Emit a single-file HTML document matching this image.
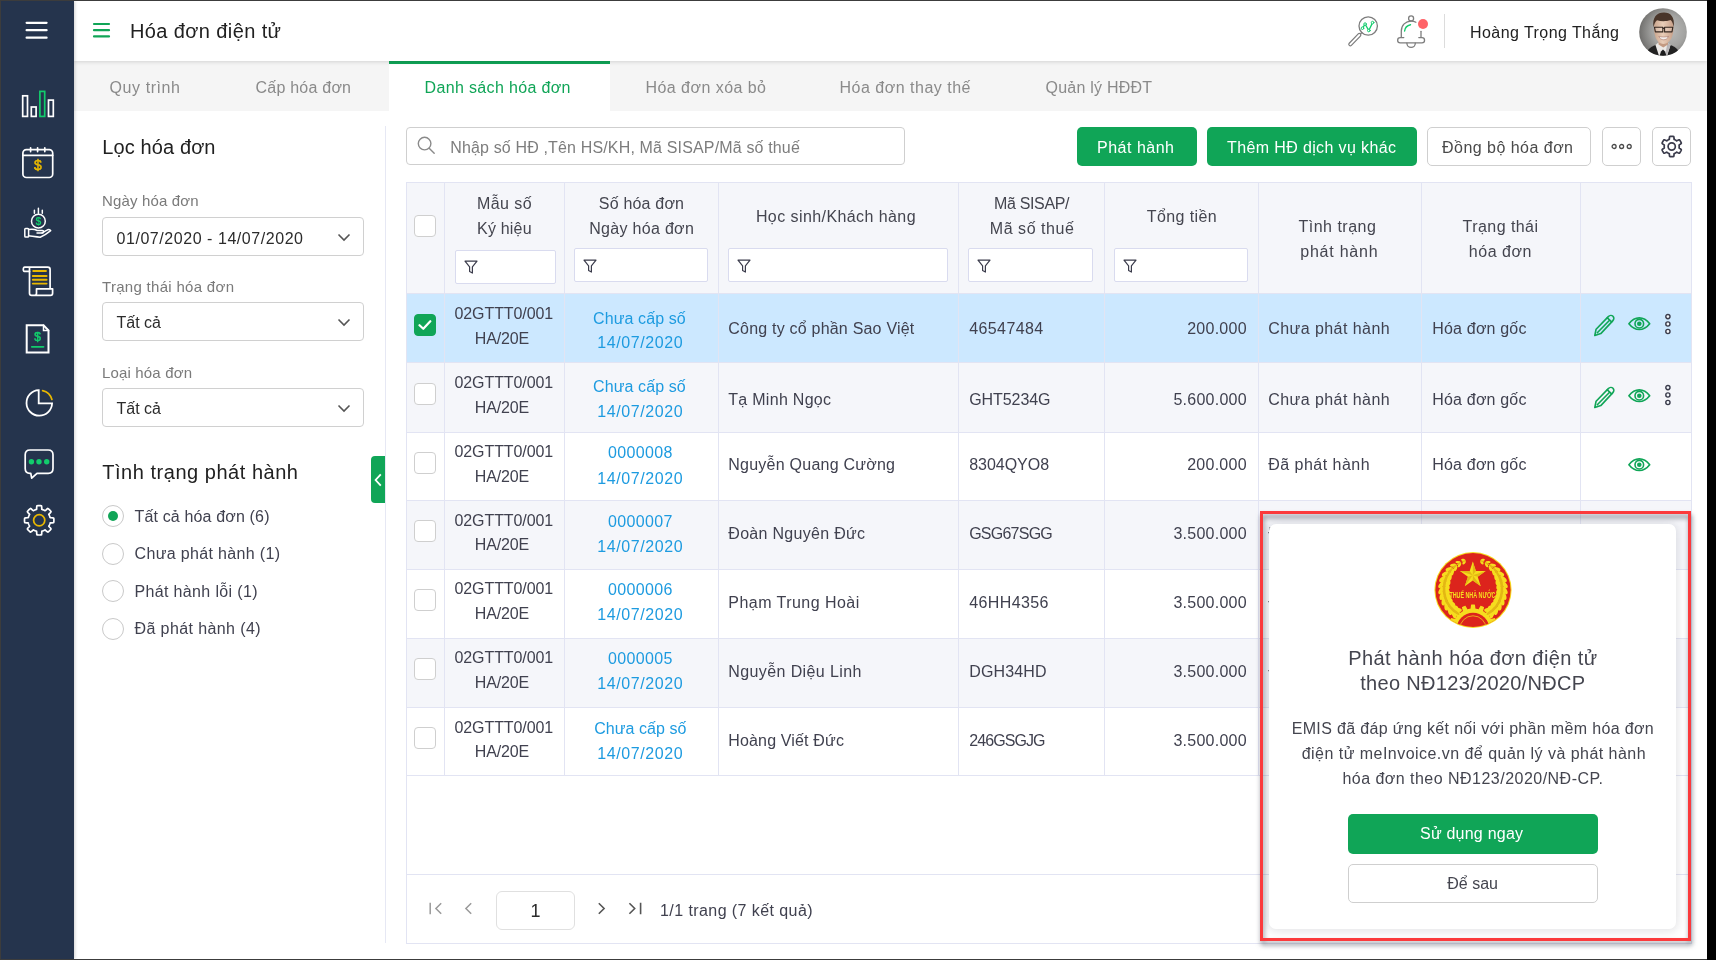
<!DOCTYPE html><html lang="vi"><head><meta charset="utf-8"><title>Hóa đơn điện tử</title><style>
*{box-sizing:border-box;margin:0;padding:0}
html,body{width:1716px;height:960px;overflow:hidden;background:#fff}
body{font-family:"Liberation Sans",sans-serif;color:#3a3b4b}
#app{position:relative;width:1716px;height:960px;overflow:hidden;background:#fff;will-change:transform}
.abs,.t,#app div,#app svg,#app section,#app header,#app nav,#app aside,#app button{position:absolute}
.t{white-space:nowrap;line-height:1;display:block}
button{font-family:inherit;border:0;background:none}
.sidebar{left:1px;top:1px;width:73px;height:958px;background:#25344d;box-shadow:1px 0 3px rgba(0,0,0,.18);z-index:4}
.header{left:74px;top:1px;width:1633px;height:60px;background:#fff;box-shadow:0 1px 4px rgba(0,0,0,.14);z-index:3}
.tabs{left:74px;top:61px;width:1633px;height:50px;background:#f5f5f5}
.tab-active{background:#fff;border-top:3px solid #10a557}
.filter{left:74px;top:111px;width:312px;height:848px;background:#fff}
.main{left:386px;top:111px;width:1321px;height:848px;background:#fff}
.sel{border:1px solid #d0d0d0;border-radius:4px;background:#fff}
.radio{width:22px;height:22px;border:1px solid #c9c9c9;border-radius:50%;background:#fff}
.radio.on::after{content:"";position:absolute;left:5px;top:5px;width:10px;height:10px;border-radius:50%;background:#10a557}
.btn{border-radius:5px;height:39px}
.btn.g{background:#10a557}
.btn.o{background:#fff;border:1px solid #cfcfcf}
.grid{border:1px solid #e2e4f3;background:#fff}
.cb{width:22px;height:22px;border:1px solid #cfcfcf;border-radius:4px;background:#fff}
.cb.on{background:#10a557;border-color:#10a557}
.fi{background:#fff;border:1px solid #d9dbef;border-radius:2px}
.vl{width:1px;background:#e2e4f3}
.hl{height:1px;background:#e2e4f3}
</style></head><body><div id="app"><aside class="sidebar"><svg style="left:-1px;top:-1px" width="75" height="560" viewBox="0 0 75 560" fill="none" stroke-linecap="round" stroke-linejoin="round"><path d="M26.6 22.8h20M26.6 30.2h20M26.6 37.7h20" stroke="#ffffff" stroke-width="2.2"/><g stroke-width="1.7" stroke-linejoin="miter"><rect x="22.7" y="95.8" width="4.8" height="20.6" stroke="#ffffff"/><rect x="31.3" y="107" width="4.8" height="9.4" stroke="#ffffff"/><rect x="39.9" y="91.4" width="4.8" height="25" stroke="#12cc6c"/><rect x="48.5" y="100.1" width="4.8" height="16.3" stroke="#ffffff"/></g><g stroke="#ffffff" stroke-width="1.7"><rect x="22.9" y="149.600" width="29.800" height="27.900" rx="3.500"/><path d="M22.900 155.300h29.800"/><path d="M30.600 147.800v3.800M37.600 147.800v3.800M44.800 147.800v3.800"/></g><text x="37.800" y="170.300" font-family="Liberation Sans,sans-serif" font-size="14" text-anchor="middle" fill="#e9b800" stroke="#e9b800" stroke-width=".5">$</text><g stroke="#ffffff" stroke-width="1.500"><circle cx="38.400" cy="221.200" r="6.900"/><path d="M34.400 210.200v3M38.400 208.300v4.900M42.300 210.200v3"/><rect x="24.800" y="228.500" width="3.800" height="8.500" rx=".8"/><path d="M28.600 229.600c3.500-.9 6.300-.4 8.600.9h5.200c1.700 0 1.700 2.600 0 2.600h-5.400"/><path d="M28.600 235.800c4.500.6 8.300 1.400 11.600 1.400 3.800-1.500 7.300-4 10.500-6.600-.900-1.600-2.500-1.400-4.200-.3l-4.400 2.600"/></g><text x="38.400" y="225.200" font-family="Liberation Sans,sans-serif" font-size="10.500" font-weight="700" text-anchor="middle" fill="#12cc6c">$</text><g stroke="#ffffff" stroke-width="1.700"><path d="M29.500 271.400h-5.200c-1.400 0-1.400-4.200.4-4.200h23c1.500 0 2.400.9 2.400 2.400v18.600"/><path d="M29.500 268v25.200c0 1.300.9 2.200 2.200 2.200h18.800c1.300 0 2.100-.9 2.100-2.200v-4.400H36.500v4.400c0 1.300-.8 2.200-2.100 2.200"/></g><path d="M33.200 271h12.800M32.800 276h13.800M32.800 279.800h13.800M32.800 283.600h13.800" stroke="#e9b800" stroke-width="1.900"/><g stroke="#ffffff" stroke-width="2" stroke-linejoin="miter"><path d="M26.700 325.200h16.800l5 5.200v22.200H26.700z"/><path d="M43.500 325.200v5.200h5" stroke-width="1.500"/></g><path d="M31.800 346.800h11.700" stroke="#12cc6c" stroke-width="1.800"/><text x="37.500" y="341.400" font-family="Liberation Sans,sans-serif" font-size="12" text-anchor="middle" fill="#12cc6c" stroke="#12cc6c" stroke-width=".6">$</text><path d="M38.700 390.100A12.800 12.800 0 1 0 52.100 403.300H38.700z" stroke="#ffffff" stroke-width="1.800" stroke-linejoin="miter"/><path d="M42.600 390.600a12.600 12.600 0 0 1 9.300 8.900" stroke="#e9b800" stroke-width="1.700"/><path d="M30 450h18.200c3 0 4.800 1.800 4.800 4.800v13.700c0 3-1.800 4.800-4.800 4.800H37l-5.300 4.900-.9-4.900H30c-3 0-4.800-1.800-4.800-4.800v-13.700c0-3 1.800-4.800 4.800-4.800z" stroke="#ffffff" stroke-width="1.700"/><g fill="#12cc6c"><circle cx="31.400" cy="461.700" r="2.700"/><circle cx="39" cy="461.700" r="2.700"/><circle cx="46.700" cy="461.700" r="2.700"/></g><path d="M39.20 505.60L39.58 505.61L39.97 505.62L40.35 505.65L40.74 505.68L41.12 505.73L41.49 505.85L41.69 506.86L41.74 508.34L41.83 509.34L42.10 509.48L42.38 509.56L42.66 509.65L42.94 509.74L43.21 509.84L43.49 509.95L43.76 510.07L44.02 510.19L44.28 510.32L44.54 510.46L44.80 510.60L45.09 510.69L45.86 510.04L46.94 509.03L47.80 508.46L48.15 508.64L48.45 508.88L48.75 509.12L49.04 509.38L49.32 509.64L49.59 509.91L49.86 510.18L50.12 510.46L50.38 510.75L50.62 511.05L50.86 511.35L51.04 511.70L50.47 512.56L49.46 513.64L48.81 514.41L48.90 514.70L49.04 514.96L49.18 515.22L49.31 515.48L49.43 515.74L49.55 516.01L49.66 516.29L49.76 516.56L49.85 516.84L49.94 517.12L50.02 517.40L50.16 517.67L51.16 517.76L52.64 517.81L53.65 518.01L53.77 518.38L53.82 518.76L53.85 519.15L53.88 519.53L53.89 519.92L53.90 520.30L53.89 520.68L53.88 521.07L53.85 521.45L53.82 521.84L53.77 522.22L53.65 522.59L52.64 522.79L51.16 522.84L50.16 522.93L50.02 523.20L49.94 523.48L49.85 523.76L49.76 524.04L49.66 524.31L49.55 524.59L49.43 524.86L49.31 525.12L49.18 525.38L49.04 525.64L48.90 525.90L48.81 526.19L49.46 526.96L50.47 528.04L51.04 528.90L50.86 529.25L50.62 529.55L50.38 529.85L50.12 530.14L49.86 530.42L49.59 530.69L49.32 530.96L49.04 531.22L48.75 531.48L48.45 531.72L48.15 531.96L47.80 532.14L46.94 531.57L45.86 530.56L45.09 529.91L44.80 530.00L44.54 530.14L44.28 530.28L44.02 530.41L43.76 530.53L43.49 530.65L43.21 530.76L42.94 530.86L42.66 530.95L42.38 531.04L42.10 531.12L41.83 531.26L41.74 532.26L41.69 533.74L41.49 534.75L41.12 534.87L40.74 534.92L40.35 534.95L39.97 534.98L39.58 534.99L39.20 535.00L38.82 534.99L38.43 534.98L38.05 534.95L37.66 534.92L37.28 534.87L36.91 534.75L36.71 533.74L36.66 532.26L36.57 531.26L36.30 531.12L36.02 531.04L35.74 530.95L35.46 530.86L35.19 530.76L34.91 530.65L34.64 530.53L34.38 530.41L34.12 530.28L33.86 530.14L33.60 530.00L33.31 529.91L32.54 530.56L31.46 531.57L30.60 532.14L30.25 531.96L29.95 531.72L29.65 531.48L29.36 531.22L29.08 530.96L28.81 530.69L28.54 530.42L28.28 530.14L28.02 529.85L27.78 529.55L27.54 529.25L27.36 528.90L27.93 528.04L28.94 526.96L29.59 526.19L29.50 525.90L29.36 525.64L29.22 525.38L29.09 525.12L28.97 524.86L28.85 524.59L28.74 524.31L28.64 524.04L28.55 523.76L28.46 523.48L28.38 523.20L28.24 522.93L27.24 522.84L25.76 522.79L24.75 522.59L24.63 522.22L24.58 521.84L24.55 521.45L24.52 521.07L24.51 520.68L24.50 520.30L24.51 519.92L24.52 519.53L24.55 519.15L24.58 518.76L24.63 518.38L24.75 518.01L25.76 517.81L27.24 517.76L28.24 517.67L28.38 517.40L28.46 517.12L28.55 516.84L28.64 516.56L28.74 516.29L28.85 516.01L28.97 515.74L29.09 515.48L29.22 515.22L29.36 514.96L29.50 514.70L29.59 514.41L28.94 513.64L27.93 512.56L27.36 511.70L27.54 511.35L27.78 511.05L28.02 510.75L28.28 510.46L28.54 510.18L28.81 509.91L29.08 509.64L29.36 509.38L29.65 509.12L29.95 508.88L30.25 508.64L30.60 508.46L31.46 509.03L32.54 510.04L33.31 510.69L33.60 510.60L33.86 510.46L34.12 510.32L34.38 510.19L34.64 510.07L34.91 509.95L35.19 509.84L35.46 509.74L35.74 509.65L36.02 509.56L36.30 509.48L36.57 509.34L36.66 508.34L36.71 506.86L36.91 505.85L37.28 505.73L37.66 505.68L38.05 505.65L38.43 505.62L38.82 505.61Z" stroke="#ffffff" stroke-width="1.700"/><circle cx="39.200" cy="520.300" r="5.600" stroke="#e9b800" stroke-width="1.700"/></svg></aside><header class="header"><svg style="left:18px;top:21px" width="20" height="16" viewBox="0 0 20 16"><path d="M2 2h15M2 8.2h15M2 14.4h15" stroke="#10a557" stroke-width="2.2" stroke-linecap="round"/></svg><span class="t" style="left:56.00px;top:20.00px;font-size:20px;color:#212121;letter-spacing:0.394px;">Hóa đơn điện tử</span><svg style="left:1266px;top:3px" width="100" height="56" viewBox="1340 4 100 56" fill="none" stroke-linecap="round" stroke-linejoin="round"><circle cx="1368.200" cy="26" r="9.200" stroke="#7d7d7d" stroke-width="1.300"/><path d="M1361.900 32.500l-1.700 1.700" stroke="#7d7d7d" stroke-width="1.300"/><path d="M1359.300 35l-9 9.300" stroke="#7d7d7d" stroke-width="4.200"/><path d="M1359.300 35l-9 9.300" stroke="#fff" stroke-width="1.800"/><path d="M1362.500 28.200l2.600-4.100 3.700 6.400 3.800-7.900" stroke="#12cc6c" stroke-width="1.300"/><g fill="#fff" stroke="#12cc6c" stroke-width="1"><circle cx="1362.500" cy="28.200" r="1.300"/><circle cx="1365.100" cy="24.100" r="1.300"/><circle cx="1368.800" cy="30.500" r="1.300"/><circle cx="1372.600" cy="22.600" r="1.300"/></g><circle cx="1411.100" cy="18.400" r="2.500" stroke="#7d7d7d" stroke-width="1.300"/><path d="M1401.300 37.300V31c0-5.800 4.300-9.900 9.800-9.900 1.800 0 3.400.4 4.800 1.200" stroke="#7d7d7d" stroke-width="1.300"/><path d="M1421 31.300v6" stroke="#7d7d7d" stroke-width="1.300"/><path d="M1403.800 37.600h-3.600c-3.400 0-3.400 5.200 0 5.200h21.800c3.400 0 3.400-5.200 0-5.200h-3.200" stroke="#7d7d7d" stroke-width="1.300"/><path d="M1406.900 43.200a4.200 4.200 0 0 0 8.400 0" stroke="#7d7d7d" stroke-width="1.300"/><path d="M1404.600 31c.4-3.300 2.600-5.600 5.900-6.300" stroke="#12cc6c" stroke-width="1.400"/><circle cx="1423" cy="24" r="5" fill="#ff6368"/></svg><div style="left:1370px;top:13px;width:1px;height:34px;background:#dcdcdc"></div><span class="t" style="left:1396.00px;top:24.00px;font-size:16px;color:#212121;letter-spacing:0.436px;">Hoàng Trọng Thắng</span><svg style="left:1565px;top:6.5px" width="48" height="48" viewBox="0 0 48 48"><defs><clipPath id="avc"><circle cx="24" cy="24" r="23.800"/></clipPath><radialGradient id="avg" cx="62%" cy="48%" r="62%"><stop offset="0" stop-color="#bdbdbb"/><stop offset=".55" stop-color="#a3a3a1"/><stop offset="1" stop-color="#6f6e6c"/></radialGradient><linearGradient id="avs" x1="0" x2="1"><stop offset="0" stop-color="#c9a48c"/><stop offset=".45" stop-color="#e9cdb8"/><stop offset="1" stop-color="#c79f88"/></linearGradient></defs><filter id="avb" x="-10%" y="-10%" width="120%" height="120%"><feGaussianBlur stdDeviation=".45"/></filter><g clip-path="url(#avc)"><rect width="48" height="48" fill="url(#avg)"/><g filter="url(#avb)"><path d="M7 48c.5-5 3-8.500 9.500-11l7.500 5 7.500-5c6.500 2.500 9 6 9.500 11z" fill="#232224"/><path d="M16.500 37l3-2.500h9l3 2.500-3.500 11h-8z" fill="#ece9e6"/><path d="M28.500 34.500l3 2.500-3.500 11h-2z" fill="#b9b6b8"/><path d="M22 43.500l2-2 2 2 1.500 4.500h-7z" fill="#1b1b1e"/><path d="M19.500 30h9.500v6.500l-4.700 3-4.800-3z" fill="#c39a82"/><path d="M15 20c0-8 3.500-11.500 9.500-11.500S34.500 12 34.500 20c0 7-3 16-10 16S15 27 15 20z" fill="url(#avs)"/><path d="M14.500 19.500C13 9 18 4.500 25 4.500c6.500 0 11 4 9.800 15-.6-4-1.800-6.500-3.300-7.500-4 1.500-9.500 1.500-13.500.3-1.800 1.500-3 4-3.500 7.200z" fill="#4a3529"/><path d="M15.500 19.300h8.300v4.600h-7.400zM25.600 19.300h8.200l-.8 4.600h-7.400z" fill="rgba(255,255,255,.15)" stroke="#33261f" stroke-width="1.100" stroke-linejoin="round"/><path d="M23.800 20.300h1.800" stroke="#2b211c" stroke-width="1.200"/><path d="M19.800 28.300c2.800.9 6.800.9 9.700 0-1 2.400-2.700 3.500-4.900 3.500s-3.800-1.100-4.800-3.500z" fill="#f4efed" stroke="#9a6458" stroke-width=".5"/></g></g></svg></header><nav class="tabs"><div class="tab-active" style="left:315px;top:0;width:221px;height:50px"></div><span class="t" style="left:35.50px;top:19.00px;font-size:16px;color:#8a8a8a;letter-spacing:0.586px;">Quy trình</span><span class="t" style="left:181.50px;top:19.00px;font-size:16px;color:#8a8a8a;letter-spacing:0.227px;">Cấp hóa đơn</span><span class="t" style="left:350.50px;top:19.00px;font-size:16px;color:#10a557;letter-spacing:0.352px;">Danh sách hóa đơn</span><span class="t" style="left:571.50px;top:19.00px;font-size:16px;color:#8a8a8a;letter-spacing:0.456px;">Hóa đơn xóa bỏ</span><span class="t" style="left:765.50px;top:19.00px;font-size:16px;color:#8a8a8a;letter-spacing:0.502px;">Hóa đơn thay thế</span><span class="t" style="left:971.50px;top:19.00px;font-size:16px;color:#8a8a8a;letter-spacing:0.224px;">Quản lý HĐĐT</span></nav><section class="filter"><span class="t" style="left:28.30px;top:26.00px;font-size:20px;color:#212121;letter-spacing:0.111px;">Lọc hóa đơn</span><span class="t" style="left:28.00px;top:82.00px;font-size:15px;color:#7a7a7a;letter-spacing:0.163px;">Ngày hóa đơn</span><span class="t" style="left:28.00px;top:168.00px;font-size:15px;color:#7a7a7a;letter-spacing:0.301px;">Trạng thái hóa đơn</span><span class="t" style="left:28.00px;top:254.00px;font-size:15px;color:#7a7a7a;letter-spacing:0.159px;">Loại hóa đơn</span><div class="sel" style="left:28px;top:106px;width:262px;height:39px"></div><span class="t" style="left:42.50px;top:120.00px;font-size:16px;color:#2b2b2b;letter-spacing:0.551px;">01/07/2020 - 14/07/2020</span><svg style="left:263px;top:122px" width="14" height="9" viewBox="0 0 14 9"><path d="M1.5 1.5l5.5 5.5 5.5-5.5" fill="none" stroke="#555" stroke-width="1.6"/></svg><div class="sel" style="left:28px;top:191px;width:262px;height:39px"></div><span class="t" style="left:42.50px;top:204.00px;font-size:16px;color:#2b2b2b;">Tất cả</span><svg style="left:263px;top:207px" width="14" height="9" viewBox="0 0 14 9"><path d="M1.5 1.5l5.5 5.5 5.5-5.5" fill="none" stroke="#555" stroke-width="1.6"/></svg><div class="sel" style="left:28px;top:277px;width:262px;height:39px"></div><span class="t" style="left:42.50px;top:290.00px;font-size:16px;color:#2b2b2b;">Tất cả</span><svg style="left:263px;top:293px" width="14" height="9" viewBox="0 0 14 9"><path d="M1.5 1.5l5.5 5.5 5.5-5.5" fill="none" stroke="#555" stroke-width="1.6"/></svg><span class="t" style="left:28.30px;top:351.00px;font-size:20px;color:#212121;letter-spacing:0.526px;">Tình trạng phát hành</span><div class="radio on" style="left:28px;top:394.3px"></div><span class="t" style="left:60.50px;top:398.00px;font-size:16px;color:#40414f;letter-spacing:0.156px;">Tất cả hóa đơn (6)</span><div class="radio" style="left:28px;top:431.7px"></div><span class="t" style="left:60.50px;top:435.00px;font-size:16px;color:#40414f;letter-spacing:0.342px;">Chưa phát hành (1)</span><div class="radio" style="left:28px;top:469.1px"></div><span class="t" style="left:60.50px;top:473.00px;font-size:16px;color:#40414f;letter-spacing:0.350px;">Phát hành lỗi (1)</span><div class="radio" style="left:28px;top:506.8px"></div><span class="t" style="left:60.50px;top:510.00px;font-size:16px;color:#40414f;letter-spacing:0.395px;">Đã phát hành (4)</span><div style="left:311px;top:15px;width:1px;height:817px;background:#e6e8f4"></div><div style="left:297px;top:345px;width:14px;height:47px;background:#10a557;border-radius:4px 0 0 4px"><svg style="left:3px;top:17px" width="8" height="14" viewBox="0 0 8 14"><path d="M6.800 1.400L1.600 7l5.200 5.600" fill="none" stroke="#fff" stroke-width="1.8"/></svg></div></section><section class="main"><div class="sel" style="left:20px;top:16px;width:499px;height:38px;border-color:#cfcfcf"></div><svg style="left:30px;top:24px" width="20" height="20" viewBox="0 0 20 20"><circle cx="8.6" cy="8.6" r="6.3" fill="none" stroke="#8a8a8a" stroke-width="1.4"/><path d="M13.2 13.2l5 5" stroke="#8a8a8a" stroke-width="1.4" stroke-linecap="round"/></svg><span class="t" style="left:64.20px;top:29.00px;font-size:16px;color:#7d7d7d;letter-spacing:0.155px;">Nhập số HĐ ,Tên HS/KH, Mã SISAP/Mã số thuế</span><button class="btn g" style="left:691px;top:16px;width:120px"></button><span class="t" style="left:711.00px;top:29.00px;font-size:16px;color:#fff;letter-spacing:0.506px;">Phát hành</span><button class="btn g" style="left:821px;top:16px;width:210px"></button><span class="t" style="left:841.00px;top:29.00px;font-size:16px;color:#fff;letter-spacing:0.377px;">Thêm HĐ dịch vụ khác</span><button class="btn o" style="left:1041px;top:16px;width:164px"></button><span class="t" style="left:1056.00px;top:29.00px;font-size:16px;color:#4a4a4a;letter-spacing:0.473px;">Đồng bộ hóa đơn</span><button class="btn o" style="left:1216px;top:16px;width:39px"></button><svg style="left:1224px;top:31px" width="24" height="9" viewBox="0 0 24 9"><g fill="none" stroke="#4a4a4a" stroke-width="1.3"><circle cx="4.1" cy="4.5" r="2"/><circle cx="11.6" cy="4.5" r="2"/><circle cx="19.2" cy="4.5" r="2"/></g></svg><button class="btn o" style="left:1266px;top:16px;width:39px"></button><svg style="left:1272px;top:22px" width="28" height="28" viewBox="1658 133 28 28" fill="none" stroke="#3a3b4b" stroke-width="1.7" stroke-linejoin="round"><path d="M1671.70 136.30L1671.97 136.30L1672.23 136.31L1672.50 136.33L1672.77 136.36L1673.03 136.39L1673.30 136.43L1673.56 136.47L1673.79 136.67L1673.93 137.22L1673.99 137.95L1674.02 138.68L1674.06 139.22L1674.20 139.43L1674.39 139.50L1674.57 139.57L1674.75 139.65L1674.93 139.73L1675.10 139.82L1675.28 139.91L1675.45 140.00L1675.62 140.11L1675.78 140.21L1675.95 140.32L1676.11 140.43L1676.27 140.55L1676.42 140.67L1676.57 140.80L1676.82 140.81L1677.31 140.59L1677.96 140.24L1678.63 139.93L1679.17 139.78L1679.46 139.88L1679.63 140.08L1679.79 140.29L1679.95 140.50L1680.11 140.72L1680.25 140.94L1680.40 141.17L1680.53 141.40L1680.66 141.63L1680.79 141.87L1680.91 142.11L1681.02 142.35L1681.12 142.60L1681.22 142.84L1681.31 143.10L1681.26 143.40L1680.85 143.79L1680.25 144.21L1679.63 144.60L1679.19 144.91L1679.07 145.13L1679.11 145.33L1679.14 145.52L1679.16 145.72L1679.18 145.91L1679.19 146.11L1679.20 146.30L1679.20 146.50L1679.20 146.70L1679.19 146.89L1679.18 147.09L1679.16 147.28L1679.14 147.48L1679.11 147.67L1679.07 147.87L1679.19 148.09L1679.63 148.40L1680.25 148.79L1680.85 149.21L1681.26 149.60L1681.31 149.90L1681.22 150.16L1681.12 150.40L1681.02 150.65L1680.91 150.89L1680.79 151.13L1680.66 151.37L1680.53 151.60L1680.40 151.83L1680.25 152.06L1680.11 152.28L1679.95 152.50L1679.79 152.71L1679.63 152.92L1679.46 153.12L1679.17 153.22L1678.63 153.07L1677.96 152.76L1677.31 152.41L1676.82 152.19L1676.57 152.20L1676.42 152.33L1676.27 152.45L1676.11 152.57L1675.95 152.68L1675.78 152.79L1675.62 152.89L1675.45 153.00L1675.28 153.09L1675.10 153.18L1674.93 153.27L1674.75 153.35L1674.57 153.43L1674.39 153.50L1674.20 153.57L1674.06 153.78L1674.02 154.32L1673.99 155.05L1673.93 155.78L1673.79 156.33L1673.56 156.53L1673.30 156.57L1673.03 156.61L1672.77 156.64L1672.50 156.67L1672.23 156.69L1671.97 156.70L1671.70 156.70L1671.43 156.70L1671.17 156.69L1670.90 156.67L1670.63 156.64L1670.37 156.61L1670.10 156.57L1669.84 156.53L1669.61 156.33L1669.47 155.78L1669.41 155.05L1669.38 154.32L1669.34 153.78L1669.20 153.57L1669.01 153.50L1668.83 153.43L1668.65 153.35L1668.47 153.27L1668.30 153.18L1668.12 153.09L1667.95 153.00L1667.78 152.89L1667.62 152.79L1667.45 152.68L1667.29 152.57L1667.13 152.45L1666.98 152.33L1666.83 152.20L1666.58 152.19L1666.09 152.41L1665.44 152.76L1664.77 153.07L1664.23 153.22L1663.94 153.12L1663.77 152.92L1663.61 152.71L1663.45 152.50L1663.29 152.28L1663.15 152.06L1663.00 151.83L1662.87 151.60L1662.74 151.37L1662.61 151.13L1662.49 150.89L1662.38 150.65L1662.28 150.40L1662.18 150.16L1662.09 149.90L1662.14 149.60L1662.55 149.21L1663.15 148.79L1663.77 148.40L1664.21 148.09L1664.33 147.87L1664.29 147.67L1664.26 147.48L1664.24 147.28L1664.22 147.09L1664.21 146.89L1664.20 146.70L1664.20 146.50L1664.20 146.30L1664.21 146.11L1664.22 145.91L1664.24 145.72L1664.26 145.52L1664.29 145.33L1664.33 145.13L1664.21 144.91L1663.77 144.60L1663.15 144.21L1662.55 143.79L1662.14 143.40L1662.09 143.10L1662.18 142.84L1662.28 142.60L1662.38 142.35L1662.49 142.11L1662.61 141.87L1662.74 141.63L1662.87 141.40L1663.00 141.17L1663.15 140.94L1663.29 140.72L1663.45 140.50L1663.61 140.29L1663.77 140.08L1663.94 139.88L1664.23 139.78L1664.77 139.93L1665.44 140.24L1666.09 140.59L1666.58 140.81L1666.83 140.80L1666.98 140.67L1667.13 140.55L1667.29 140.43L1667.45 140.32L1667.62 140.21L1667.78 140.11L1667.95 140.00L1668.12 139.91L1668.30 139.82L1668.47 139.73L1668.65 139.65L1668.83 139.57L1669.01 139.50L1669.20 139.43L1669.34 139.22L1669.38 138.68L1669.41 137.95L1669.47 137.22L1669.61 136.67L1669.84 136.47L1670.10 136.43L1670.37 136.39L1670.63 136.36L1670.90 136.33L1671.17 136.31L1671.43 136.30Z"/><circle cx="1671.7" cy="146.5" r="3.6"/></svg><div class="grid" style="left:20px;top:71px;width:1286px;height:762px"><div style="left:0;top:0;width:1284px;height:110.2px;background:#f5f6fa"></div><div style="left:0;top:110.2px;width:1284px;height:68.8px;background:#cce8ff"></div><div style="left:0;top:179.0px;width:1284px;height:69.6px;background:#f5f6fa"></div><div style="left:0;top:248.6px;width:1284px;height:68.8px;background:#fff"></div><div style="left:0;top:317.4px;width:1284px;height:68.9px;background:#f5f6fa"></div><div style="left:0;top:386.3px;width:1284px;height:68.9px;background:#fff"></div><div style="left:0;top:455.2px;width:1284px;height:68.8px;background:#f5f6fa"></div><div style="left:0;top:524.0px;width:1284px;height:68.3px;background:#fff"></div><div class="hl" style="left:0;top:110.2px;width:1284px"></div><div class="hl" style="left:0;top:179.0px;width:1284px"></div><div class="hl" style="left:0;top:248.6px;width:1284px"></div><div class="hl" style="left:0;top:317.4px;width:1284px"></div><div class="hl" style="left:0;top:386.3px;width:1284px"></div><div class="hl" style="left:0;top:455.2px;width:1284px"></div><div class="hl" style="left:0;top:524.0px;width:1284px"></div><div class="hl" style="left:0;top:592.3px;width:1284px"></div><div class="hl" style="left:0;top:691px;width:1284px"></div><div class="vl" style="left:37px;top:0;height:592.3px"></div><div class="vl" style="left:157px;top:0;height:592.3px"></div><div class="vl" style="left:311px;top:0;height:592.3px"></div><div class="vl" style="left:551px;top:0;height:592.3px"></div><div class="vl" style="left:697px;top:0;height:592.3px"></div><div class="vl" style="left:851px;top:0;height:592.3px"></div><div class="vl" style="left:1014px;top:0;height:592.3px"></div><div class="vl" style="left:1173px;top:0;height:592.3px"></div><span class="t" style="left:70.00px;top:13.00px;font-size:16px;color:#44454f;letter-spacing:0.426px;">Mẫu số</span><span class="t" style="left:70.00px;top:38.00px;font-size:16px;color:#44454f;letter-spacing:0.204px;">Ký hiệu</span><span class="t" style="left:191.80px;top:13.00px;font-size:16px;color:#44454f;letter-spacing:0.194px;">Số hóa đơn</span><span class="t" style="left:182.20px;top:38.00px;font-size:16px;color:#44454f;letter-spacing:0.306px;">Ngày hóa đơn</span><span class="t" style="left:348.90px;top:26.00px;font-size:16px;color:#44454f;letter-spacing:0.422px;">Học sinh/Khách hàng</span><span class="t" style="left:587.00px;top:13.00px;font-size:16px;color:#44454f;letter-spacing:-0.344px;">Mã SISAP/</span><span class="t" style="left:582.80px;top:38.00px;font-size:16px;color:#44454f;letter-spacing:0.549px;">Mã số thuế</span><span class="t" style="left:739.80px;top:26.00px;font-size:16px;color:#44454f;letter-spacing:0.385px;">Tổng tiền</span><span class="t" style="left:891.50px;top:36.00px;font-size:16px;color:#44454f;letter-spacing:0.485px;">Tình trạng</span><span class="t" style="left:893.30px;top:61.00px;font-size:16px;color:#44454f;letter-spacing:0.764px;">phát hành</span><span class="t" style="left:1055.60px;top:36.00px;font-size:16px;color:#44454f;letter-spacing:0.439px;">Trạng thái</span><span class="t" style="left:1061.80px;top:61.00px;font-size:16px;color:#44454f;letter-spacing:0.544px;">hóa đơn</span><div class="cb" style="left:7.0px;top:32.3px"></div><div class="fi" style="left:47.5px;top:66.5px;width:101px;height:34px"></div><svg style="left:56.5px;top:77.0px" width="14" height="15" viewBox="0 0 14 15"><path d="M1 1.2h12l-4.6 5.6v6.3l-2.8-1.6V6.8z" fill="none" stroke="#3a3b4b" stroke-width="1.2" stroke-linejoin="round"/></svg><div class="fi" style="left:167.2px;top:65.3px;width:134px;height:34px"></div><svg style="left:176.20000000000005px;top:75.80000000000001px" width="14" height="15" viewBox="0 0 14 15"><path d="M1 1.2h12l-4.6 5.6v6.3l-2.8-1.6V6.8z" fill="none" stroke="#3a3b4b" stroke-width="1.2" stroke-linejoin="round"/></svg><div class="fi" style="left:320.8px;top:65.3px;width:220px;height:34px"></div><svg style="left:329.79999999999995px;top:75.80000000000001px" width="14" height="15" viewBox="0 0 14 15"><path d="M1 1.2h12l-4.6 5.6v6.3l-2.8-1.6V6.8z" fill="none" stroke="#3a3b4b" stroke-width="1.2" stroke-linejoin="round"/></svg><div class="fi" style="left:561.4px;top:65.3px;width:125px;height:34px"></div><svg style="left:570.4px;top:75.80000000000001px" width="14" height="15" viewBox="0 0 14 15"><path d="M1 1.2h12l-4.6 5.6v6.3l-2.8-1.6V6.8z" fill="none" stroke="#3a3b4b" stroke-width="1.2" stroke-linejoin="round"/></svg><div class="fi" style="left:707.3px;top:65.3px;width:133.5px;height:34px"></div><svg style="left:716.3px;top:75.80000000000001px" width="14" height="15" viewBox="0 0 14 15"><path d="M1 1.2h12l-4.6 5.6v6.3l-2.8-1.6V6.8z" fill="none" stroke="#3a3b4b" stroke-width="1.2" stroke-linejoin="round"/></svg><div class="cb on" style="left:7.0px;top:131.3px"><svg style="left:3px;top:4px" width="14" height="12" viewBox="0 0 14 12"><path d="M1.5 6.2l3.8 3.6 7-7.6" fill="none" stroke="#fff" stroke-width="2.2" stroke-linecap="round" stroke-linejoin="round"/></svg></div><span class="t" style="left:47.50px;top:123.00px;font-size:16px;color:#40414f;letter-spacing:-0.091px;">02GTTT0/001</span><span class="t" style="left:67.70px;top:148.00px;font-size:16px;color:#40414f;letter-spacing:-0.108px;">HA/20E</span><span class="t" style="left:186.00px;top:128.00px;font-size:16px;color:#1d9be0;letter-spacing:0.104px;">Chưa cấp số</span><span class="t" style="left:190.30px;top:152.00px;font-size:16px;color:#1d9be0;letter-spacing:0.591px;">14/07/2020</span><span class="t" style="left:321.30px;top:138.00px;font-size:16px;color:#40414f;letter-spacing:0.210px;">Công ty cổ phần Sao Việt</span><span class="t" style="left:562.20px;top:138.00px;font-size:16px;color:#40414f;letter-spacing:0.402px;">46547484</span><span class="t" style="left:780.20px;top:138.00px;font-size:16px;color:#40414f;letter-spacing:0.259px;">200.000</span><span class="t" style="left:861.20px;top:138.00px;font-size:16px;color:#40414f;letter-spacing:0.447px;">Chưa phát hành</span><span class="t" style="left:1025.30px;top:138.00px;font-size:16px;color:#40414f;letter-spacing:0.177px;">Hóa đơn gốc</span><svg style="left:1185.0px;top:129.0px" width="26" height="26" viewBox="0 0 26 26" fill="none" stroke="#10a557" stroke-width="1.600" stroke-linejoin="round" stroke-linecap="round"><path d="M4.100 17.200L16.300 4.600c1.400-1.400 3.500-1.500 4.700-.300 1.200 1.200 1.100 3.200-.300 4.600L8.800 21.600l-6 1.900z"/><path d="M5.300 20.800L17.600 8.200"/><path d="M15.300 5.900l4.300 4"/></svg><svg style="left:1220.0px;top:132.9px" width="25" height="16" viewBox="0 0 25 16" fill="none" stroke="#10a557" stroke-width="1.600" stroke-linejoin="round"><path d="M1.900 7.700C5.200 3.500 8.600 1.900 12.300 1.900s7.100 1.600 10.400 5.800c-3.300 4.200-6.700 5.800-10.400 5.800S5.200 11.900 1.900 7.700z"/><circle cx="12.300" cy="7.700" r="4.300"/><circle cx="12.300" cy="7.700" r="2.300" fill="#10a557" stroke="none"/></svg><svg style="left:1257px;top:129.6px" width="8" height="22" viewBox="0 0 8 22"><g fill="#f3f7fb" stroke="#3a3b4b" stroke-width="1.4"><circle cx="3.900" cy="3.600" r="2.100"/><circle cx="3.900" cy="11" r="2.100"/><circle cx="3.900" cy="18.500" r="2.100"/></g></svg><div class="cb" style="left:7.0px;top:200.2px"></div><span class="t" style="left:47.50px;top:192.00px;font-size:16px;color:#40414f;letter-spacing:-0.091px;">02GTTT0/001</span><span class="t" style="left:67.70px;top:217.00px;font-size:16px;color:#40414f;letter-spacing:-0.108px;">HA/20E</span><span class="t" style="left:186.00px;top:196.00px;font-size:16px;color:#1d9be0;letter-spacing:0.104px;">Chưa cấp số</span><span class="t" style="left:190.30px;top:221.00px;font-size:16px;color:#1d9be0;letter-spacing:0.591px;">14/07/2020</span><span class="t" style="left:321.30px;top:209.00px;font-size:16px;color:#40414f;letter-spacing:0.282px;">Tạ Minh Ngọc</span><span class="t" style="left:562.20px;top:209.00px;font-size:16px;color:#40414f;letter-spacing:-0.073px;">GHT5234G</span><span class="t" style="left:766.40px;top:209.00px;font-size:16px;color:#40414f;letter-spacing:0.252px;">5.600.000</span><span class="t" style="left:861.20px;top:209.00px;font-size:16px;color:#40414f;letter-spacing:0.447px;">Chưa phát hành</span><span class="t" style="left:1025.30px;top:209.00px;font-size:16px;color:#40414f;letter-spacing:0.177px;">Hóa đơn gốc</span><svg style="left:1185.0px;top:200.8px" width="26" height="26" viewBox="0 0 26 26" fill="none" stroke="#10a557" stroke-width="1.600" stroke-linejoin="round" stroke-linecap="round"><path d="M4.100 17.200L16.300 4.600c1.400-1.400 3.500-1.500 4.700-.300 1.200 1.200 1.100 3.200-.300 4.600L8.800 21.600l-6 1.900z"/><path d="M5.300 20.800L17.600 8.200"/><path d="M15.300 5.900l4.300 4"/></svg><svg style="left:1220.0px;top:204.7px" width="25" height="16" viewBox="0 0 25 16" fill="none" stroke="#10a557" stroke-width="1.600" stroke-linejoin="round"><path d="M1.900 7.700C5.200 3.500 8.600 1.900 12.300 1.900s7.100 1.600 10.400 5.800c-3.300 4.200-6.700 5.800-10.400 5.800S5.200 11.900 1.900 7.700z"/><circle cx="12.300" cy="7.700" r="4.300"/><circle cx="12.300" cy="7.700" r="2.300" fill="#10a557" stroke="none"/></svg><svg style="left:1257px;top:201.4px" width="8" height="22" viewBox="0 0 8 22"><g fill="#f3f7fb" stroke="#3a3b4b" stroke-width="1.4"><circle cx="3.900" cy="3.600" r="2.100"/><circle cx="3.900" cy="11" r="2.100"/><circle cx="3.900" cy="18.500" r="2.100"/></g></svg><div class="cb" style="left:7.0px;top:268.9px"></div><span class="t" style="left:47.50px;top:261.00px;font-size:16px;color:#40414f;letter-spacing:-0.091px;">02GTTT0/001</span><span class="t" style="left:67.70px;top:286.00px;font-size:16px;color:#40414f;letter-spacing:-0.108px;">HA/20E</span><span class="t" style="left:201.00px;top:262.00px;font-size:16px;color:#1d9be0;letter-spacing:0.367px;">0000008</span><span class="t" style="left:190.30px;top:288.00px;font-size:16px;color:#1d9be0;letter-spacing:0.591px;">14/07/2020</span><span class="t" style="left:321.30px;top:274.00px;font-size:16px;color:#40414f;letter-spacing:0.239px;">Nguyễn Quang Cường</span><span class="t" style="left:562.20px;top:274.00px;font-size:16px;color:#40414f;letter-spacing:-0.023px;">8304QYO8</span><span class="t" style="left:780.20px;top:274.00px;font-size:16px;color:#40414f;letter-spacing:0.259px;">200.000</span><span class="t" style="left:861.20px;top:274.00px;font-size:16px;color:#40414f;letter-spacing:0.484px;">Đã phát hành</span><span class="t" style="left:1025.30px;top:274.00px;font-size:16px;color:#40414f;letter-spacing:0.177px;">Hóa đơn gốc</span><svg style="left:1220.0px;top:274.0px" width="25" height="16" viewBox="0 0 25 16" fill="none" stroke="#10a557" stroke-width="1.600" stroke-linejoin="round"><path d="M1.900 7.700C5.200 3.500 8.600 1.900 12.300 1.900s7.100 1.600 10.400 5.800c-3.300 4.200-6.700 5.800-10.400 5.800S5.200 11.900 1.900 7.700z"/><circle cx="12.300" cy="7.700" r="4.300"/><circle cx="12.300" cy="7.700" r="2.300" fill="#10a557" stroke="none"/></svg><div class="cb" style="left:7.0px;top:337.4px"></div><span class="t" style="left:47.50px;top:330.00px;font-size:16px;color:#40414f;letter-spacing:-0.091px;">02GTTT0/001</span><span class="t" style="left:67.70px;top:354.00px;font-size:16px;color:#40414f;letter-spacing:-0.108px;">HA/20E</span><span class="t" style="left:201.00px;top:331.00px;font-size:16px;color:#1d9be0;letter-spacing:0.367px;">0000007</span><span class="t" style="left:190.30px;top:356.00px;font-size:16px;color:#1d9be0;letter-spacing:0.591px;">14/07/2020</span><span class="t" style="left:321.30px;top:343.00px;font-size:16px;color:#40414f;letter-spacing:0.296px;">Đoàn Nguyên Đức</span><span class="t" style="left:562.20px;top:343.00px;font-size:16px;color:#40414f;letter-spacing:-0.760px;">GSG67SGG</span><span class="t" style="left:766.40px;top:343.00px;font-size:16px;color:#40414f;letter-spacing:0.252px;">3.500.000</span><span class="t" style="left:861.20px;top:343.00px;font-size:16px;color:#40414f;letter-spacing:0.484px;">Đã phát hành</span><span class="t" style="left:1025.30px;top:343.00px;font-size:16px;color:#40414f;letter-spacing:0.177px;">Hóa đơn gốc</span><svg style="left:1220.0px;top:343.3px" width="25" height="16" viewBox="0 0 25 16" fill="none" stroke="#10a557" stroke-width="1.600" stroke-linejoin="round"><path d="M1.900 7.700C5.200 3.500 8.600 1.900 12.300 1.900s7.100 1.600 10.400 5.800c-3.300 4.200-6.700 5.800-10.400 5.800S5.200 11.900 1.900 7.700z"/><circle cx="12.300" cy="7.700" r="4.300"/><circle cx="12.300" cy="7.700" r="2.300" fill="#10a557" stroke="none"/></svg><div class="cb" style="left:7.0px;top:406.3px"></div><span class="t" style="left:47.50px;top:398.00px;font-size:16px;color:#40414f;letter-spacing:-0.091px;">02GTTT0/001</span><span class="t" style="left:67.70px;top:423.00px;font-size:16px;color:#40414f;letter-spacing:-0.108px;">HA/20E</span><span class="t" style="left:201.00px;top:399.00px;font-size:16px;color:#1d9be0;letter-spacing:0.367px;">0000006</span><span class="t" style="left:190.30px;top:424.00px;font-size:16px;color:#1d9be0;letter-spacing:0.591px;">14/07/2020</span><span class="t" style="left:321.30px;top:412.00px;font-size:16px;color:#40414f;letter-spacing:0.456px;">Phạm Trung Hoài</span><span class="t" style="left:562.20px;top:412.00px;font-size:16px;color:#40414f;letter-spacing:0.386px;">46HH4356</span><span class="t" style="left:766.40px;top:412.00px;font-size:16px;color:#40414f;letter-spacing:0.252px;">3.500.000</span><span class="t" style="left:861.20px;top:412.00px;font-size:16px;color:#40414f;letter-spacing:0.484px;">Đã phát hành</span><span class="t" style="left:1025.30px;top:412.00px;font-size:16px;color:#40414f;letter-spacing:0.177px;">Hóa đơn gốc</span><svg style="left:1220.0px;top:411.9px" width="25" height="16" viewBox="0 0 25 16" fill="none" stroke="#10a557" stroke-width="1.600" stroke-linejoin="round"><path d="M1.900 7.700C5.200 3.500 8.600 1.900 12.300 1.900s7.100 1.600 10.400 5.800c-3.300 4.200-6.700 5.800-10.400 5.800S5.200 11.900 1.900 7.700z"/><circle cx="12.300" cy="7.700" r="4.300"/><circle cx="12.300" cy="7.700" r="2.300" fill="#10a557" stroke="none"/></svg><div class="cb" style="left:7.0px;top:474.9px"></div><span class="t" style="left:47.50px;top:467.00px;font-size:16px;color:#40414f;letter-spacing:-0.091px;">02GTTT0/001</span><span class="t" style="left:67.70px;top:492.00px;font-size:16px;color:#40414f;letter-spacing:-0.108px;">HA/20E</span><span class="t" style="left:201.00px;top:468.00px;font-size:16px;color:#1d9be0;letter-spacing:0.367px;">0000005</span><span class="t" style="left:190.30px;top:493.00px;font-size:16px;color:#1d9be0;letter-spacing:0.591px;">14/07/2020</span><span class="t" style="left:321.30px;top:481.00px;font-size:16px;color:#40414f;letter-spacing:0.393px;">Nguyễn Diệu Linh</span><span class="t" style="left:562.20px;top:481.00px;font-size:16px;color:#40414f;letter-spacing:0.155px;">DGH34HD</span><span class="t" style="left:766.40px;top:481.00px;font-size:16px;color:#40414f;letter-spacing:0.252px;">3.500.000</span><span class="t" style="left:861.20px;top:481.00px;font-size:16px;color:#40414f;letter-spacing:0.484px;">Đã phát hành</span><span class="t" style="left:1025.30px;top:481.00px;font-size:16px;color:#40414f;letter-spacing:0.177px;">Hóa đơn gốc</span><svg style="left:1220.0px;top:480.7px" width="25" height="16" viewBox="0 0 25 16" fill="none" stroke="#10a557" stroke-width="1.600" stroke-linejoin="round"><path d="M1.900 7.700C5.200 3.500 8.600 1.900 12.300 1.900s7.100 1.600 10.400 5.800c-3.300 4.200-6.700 5.800-10.400 5.800S5.200 11.900 1.900 7.700z"/><circle cx="12.300" cy="7.700" r="4.300"/><circle cx="12.300" cy="7.700" r="2.300" fill="#10a557" stroke="none"/></svg><div class="cb" style="left:7.0px;top:544.1px"></div><span class="t" style="left:47.50px;top:537.00px;font-size:16px;color:#40414f;letter-spacing:-0.091px;">02GTTT0/001</span><span class="t" style="left:67.70px;top:561.00px;font-size:16px;color:#40414f;letter-spacing:-0.108px;">HA/20E</span><span class="t" style="left:187.20px;top:538.00px;font-size:16px;color:#1d9be0;letter-spacing:0.054px;">Chưa cấp số</span><span class="t" style="left:190.30px;top:563.00px;font-size:16px;color:#1d9be0;letter-spacing:0.591px;">14/07/2020</span><span class="t" style="left:321.30px;top:550.00px;font-size:16px;color:#40414f;letter-spacing:0.154px;">Hoàng Viết Đức</span><span class="t" style="left:562.20px;top:550.00px;font-size:16px;color:#40414f;letter-spacing:-0.915px;">246GSGJG</span><span class="t" style="left:766.40px;top:550.00px;font-size:16px;color:#40414f;letter-spacing:0.252px;">3.500.000</span><span class="t" style="left:861.20px;top:550.00px;font-size:16px;color:#40414f;letter-spacing:0.447px;">Chưa phát hành</span><span class="t" style="left:1025.30px;top:550.00px;font-size:16px;color:#40414f;letter-spacing:0.177px;">Hóa đơn gốc</span><svg style="left:1185.0px;top:546.4px" width="26" height="26" viewBox="0 0 26 26" fill="none" stroke="#10a557" stroke-width="1.600" stroke-linejoin="round" stroke-linecap="round"><path d="M4.100 17.200L16.300 4.600c1.400-1.400 3.500-1.500 4.700-.300 1.200 1.200 1.100 3.200-.300 4.600L8.800 21.600l-6 1.900z"/><path d="M5.300 20.800L17.600 8.200"/><path d="M15.300 5.900l4.300 4"/></svg><svg style="left:1220.0px;top:550.3px" width="25" height="16" viewBox="0 0 25 16" fill="none" stroke="#10a557" stroke-width="1.600" stroke-linejoin="round"><path d="M1.900 7.700C5.200 3.500 8.600 1.900 12.300 1.900s7.100 1.600 10.400 5.800c-3.300 4.200-6.700 5.800-10.400 5.800S5.200 11.900 1.900 7.700z"/><circle cx="12.300" cy="7.700" r="4.300"/><circle cx="12.300" cy="7.700" r="2.300" fill="#10a557" stroke="none"/></svg><svg style="left:1257px;top:547.0px" width="8" height="22" viewBox="0 0 8 22"><g fill="#f3f7fb" stroke="#3a3b4b" stroke-width="1.4"><circle cx="3.900" cy="3.600" r="2.100"/><circle cx="3.900" cy="11" r="2.100"/><circle cx="3.900" cy="18.500" r="2.100"/></g></svg><svg style="left:21px;top:718px" width="16" height="15" viewBox="0 0 16 15"><path d="M2.2 1.8v11.4M13.2 2.2L7.9 7.5l5.300 5.300" fill="none" stroke="#9a9a9a" stroke-width="1.500"/></svg><svg style="left:55px;top:718px" width="12" height="15" viewBox="0 0 12 15"><path d="M9.200 2.200L3.900 7.500l5.300 5.300" fill="none" stroke="#9a9a9a" stroke-width="1.500"/></svg><div class="sel" style="left:89px;top:707.5px;width:79px;height:39px;border-color:#e0e0e0;border-radius:6px"></div><span class="t" style="left:123.50px;top:719.00px;font-size:18px;color:#2b2b2b;">1</span><svg style="left:189px;top:718px" width="12" height="15" viewBox="0 0 12 15"><path d="M2.800 2.200l5.300 5.300-5.300 5.300" fill="none" stroke="#555" stroke-width="1.600"/></svg><svg style="left:220px;top:718px" width="16" height="15" viewBox="0 0 16 15"><path d="M13.600 1.800v11.400M2.400 2.200l5.300 5.300-5.300 5.300" fill="none" stroke="#555" stroke-width="1.600"/></svg><span class="t" style="left:253.00px;top:720.00px;font-size:16px;color:#40414f;letter-spacing:0.425px;">1/1 trang (7 kết quả)</span></div></section><div style="left:1260px;top:511px;width:431px;height:430px;border:3px solid #fb3a3c;filter:drop-shadow(1.5px 4px 2.5px rgba(45,50,65,.58));z-index:6"></div><div style="left:1269px;top:524px;width:407px;height:405px;background:#fff;border-radius:7px;box-shadow:0 1px 8px 2px rgba(60,64,80,.13);z-index:5"><svg style="left:165.2px;top:27.6px" width="78" height="76" viewBox="0 0 78 76"><defs><clipPath id="emc"><ellipse cx="39" cy="38" rx="37.600" ry="36.900"/></clipPath></defs><ellipse cx="39" cy="38" rx="38.600" ry="37.900" fill="#f6dd1e"/><ellipse cx="39" cy="38" rx="37.600" ry="36.900" fill="#dc241c"/><g clip-path="url(#emc)"><path d="M39.00 52.50L39.48 52.50L39.96 52.52L40.44 52.54L40.92 52.65L41.21 54.61L41.42 56.56L41.81 56.69L42.21 56.75L42.60 56.82L43.00 56.89L43.39 56.98L43.79 57.07L44.18 57.16L44.59 57.19L45.53 55.47L46.55 53.77L47.03 53.85L47.48 54.01L47.93 54.19L48.38 54.36L48.82 54.55L49.26 54.75L49.69 54.96L50.09 55.24L49.61 57.16L49.05 59.05L49.37 59.31L49.71 59.52L50.05 59.73L50.39 59.95L50.72 60.18L51.05 60.42L51.37 60.65L51.74 60.84L53.27 59.61L54.86 58.43L55.27 58.69L55.63 59.01L55.98 59.34L56.32 59.68L56.66 60.02L56.99 60.37L57.31 60.73L57.57 61.14L56.39 62.73L55.16 64.26L55.35 64.63L55.58 64.95L55.82 65.28L56.05 65.61L56.27 65.95L56.48 66.29L56.69 66.63L56.95 66.95L58.84 66.39L60.76 65.91L61.04 66.31L61.25 66.74L61.45 67.18L61.64 67.62L61.81 68.07L61.99 68.52L62.15 68.97L62.23 69.45L60.53 70.47L58.81 71.41L58.84 71.82L58.93 72.21L59.02 72.61L59.11 73.00L59.18 73.40L59.25 73.79L59.31 74.19L59.44 74.58L61.39 74.79L63.35 75.08L63.46 75.56L63.48 76.04L63.50 76.52L63.50 77.00L63.50 77.48L63.48 77.96L63.46 78.44L63.35 78.92L61.39 79.21L59.44 79.42L59.31 79.81L59.25 80.21L59.18 80.60L59.11 81.00L59.02 81.39L58.93 81.79L58.84 82.18L58.81 82.59L60.53 83.53L62.23 84.55L62.15 85.03L61.99 85.48L61.81 85.93L61.64 86.38L61.45 86.82L61.25 87.26L61.04 87.69L60.76 88.09L58.84 87.61L56.95 87.05L56.69 87.37L56.48 87.71L56.27 88.05L56.05 88.39L55.82 88.72L55.58 89.05L55.35 89.37L55.16 89.74L56.39 91.27L57.57 92.86L57.31 93.27L56.99 93.63L56.66 93.98L56.32 94.32L55.98 94.66L55.63 94.99L55.27 95.31L54.86 95.57L53.27 94.39L51.74 93.16L51.37 93.35L51.05 93.58L50.72 93.82L50.39 94.05L50.05 94.27L49.71 94.48L49.37 94.69L49.05 94.95L49.61 96.84L50.09 98.76L49.69 99.04L49.26 99.25L48.82 99.45L48.38 99.64L47.93 99.81L47.48 99.99L47.03 100.15L46.55 100.23L45.53 98.53L44.59 96.81L44.18 96.84L43.79 96.93L43.39 97.02L43.00 97.11L42.60 97.18L42.21 97.25L41.81 97.31L41.42 97.44L41.21 99.39L40.92 101.35L40.44 101.46L39.96 101.48L39.48 101.50L39.00 101.50L38.52 101.50L38.04 101.48L37.56 101.46L37.08 101.35L36.79 99.39L36.58 97.44L36.19 97.31L35.79 97.25L35.40 97.18L35.00 97.11L34.61 97.02L34.21 96.93L33.82 96.84L33.41 96.81L32.47 98.53L31.45 100.23L30.97 100.15L30.52 99.99L30.07 99.81L29.62 99.64L29.18 99.45L28.74 99.25L28.31 99.04L27.91 98.76L28.39 96.84L28.95 94.95L28.63 94.69L28.29 94.48L27.95 94.27L27.61 94.05L27.28 93.82L26.95 93.58L26.63 93.35L26.26 93.16L24.73 94.39L23.14 95.57L22.73 95.31L22.37 94.99L22.02 94.66L21.68 94.32L21.34 93.98L21.01 93.63L20.69 93.27L20.43 92.86L21.61 91.27L22.84 89.74L22.65 89.37L22.42 89.05L22.18 88.72L21.95 88.39L21.73 88.05L21.52 87.71L21.31 87.37L21.05 87.05L19.16 87.61L17.24 88.09L16.96 87.69L16.75 87.26L16.55 86.82L16.36 86.38L16.19 85.93L16.01 85.48L15.85 85.03L15.77 84.55L17.47 83.53L19.19 82.59L19.16 82.18L19.07 81.79L18.98 81.39L18.89 81.00L18.82 80.60L18.75 80.21L18.69 79.81L18.56 79.42L16.61 79.21L14.65 78.92L14.54 78.44L14.52 77.96L14.50 77.48L14.50 77.00L14.50 76.52L14.52 76.04L14.54 75.56L14.65 75.08L16.61 74.79L18.56 74.58L18.69 74.19L18.75 73.79L18.82 73.40L18.89 73.00L18.98 72.61L19.07 72.21L19.16 71.82L19.19 71.41L17.47 70.47L15.77 69.45L15.85 68.97L16.01 68.52L16.19 68.07L16.36 67.62L16.55 67.18L16.75 66.74L16.96 66.31L17.24 65.91L19.16 66.39L21.05 66.95L21.31 66.63L21.52 66.29L21.73 65.95L21.95 65.61L22.18 65.28L22.42 64.95L22.65 64.63L22.84 64.26L21.61 62.73L20.43 61.14L20.69 60.73L21.01 60.37L21.34 60.02L21.68 59.68L22.02 59.34L22.37 59.01L22.73 58.69L23.14 58.43L24.73 59.61L26.26 60.84L26.63 60.65L26.95 60.42L27.28 60.18L27.61 59.95L27.95 59.73L28.29 59.52L28.63 59.31L28.95 59.05L28.39 57.16L27.91 55.24L28.31 54.96L28.74 54.75L29.18 54.55L29.62 54.36L30.07 54.19L30.52 54.01L30.97 53.85L31.45 53.77L32.47 55.47L33.41 57.19L33.82 57.16L34.21 57.07L34.61 56.98L35.00 56.89L35.40 56.82L35.79 56.75L36.19 56.69L36.58 56.56L36.79 54.61L37.08 52.65L37.56 52.54L38.04 52.52L38.52 52.50Z" fill="#f6dd1e"/><circle cx="39" cy="77" r="16.300" fill="#dc241c"/><circle cx="39" cy="77" r="13.200" fill="none" stroke="#f6dd1e" stroke-width=".7"/><ellipse cx="20.0" cy="62.3" rx="4.4" ry="2.1" fill="#f6dd1e" transform="rotate(68 20.0 62.3)"/><ellipse cx="23.5" cy="57.9" rx="4.4" ry="2.1" fill="#f6dd1e" transform="rotate(8 23.5 57.9)"/><ellipse cx="21.8" cy="60.1" rx="4.4" ry="1.3" fill="#e3b714" transform="rotate(38 21.8 60.1)"/><ellipse cx="15.9" cy="58.6" rx="4.4" ry="2.1" fill="#f6dd1e" transform="rotate(78 15.9 58.6)"/><ellipse cx="20.0" cy="54.9" rx="4.4" ry="2.1" fill="#f6dd1e" transform="rotate(18 20.0 54.9)"/><ellipse cx="17.9" cy="56.7" rx="4.4" ry="1.3" fill="#e3b714" transform="rotate(48 17.9 56.7)"/><ellipse cx="12.4" cy="54.2" rx="4.4" ry="2.1" fill="#f6dd1e" transform="rotate(89 12.4 54.2)"/><ellipse cx="17.2" cy="51.3" rx="4.4" ry="2.1" fill="#f6dd1e" transform="rotate(29 17.2 51.3)"/><ellipse cx="14.8" cy="52.8" rx="4.4" ry="1.3" fill="#e3b714" transform="rotate(59 14.8 52.8)"/><ellipse cx="9.7" cy="49.2" rx="4.4" ry="2.1" fill="#f6dd1e" transform="rotate(99 9.7 49.2)"/><ellipse cx="15.0" cy="47.2" rx="4.4" ry="2.1" fill="#f6dd1e" transform="rotate(39 15.0 47.2)"/><ellipse cx="12.3" cy="48.2" rx="4.4" ry="1.3" fill="#e3b714" transform="rotate(69 12.3 48.2)"/><ellipse cx="8.0" cy="43.8" rx="4.4" ry="2.1" fill="#f6dd1e" transform="rotate(109 8.0 43.8)"/><ellipse cx="13.5" cy="42.8" rx="4.4" ry="2.1" fill="#f6dd1e" transform="rotate(49 13.5 42.8)"/><ellipse cx="10.8" cy="43.3" rx="4.4" ry="1.3" fill="#e3b714" transform="rotate(79 10.8 43.3)"/><ellipse cx="7.3" cy="38.2" rx="4.4" ry="2.1" fill="#f6dd1e" transform="rotate(120 7.3 38.2)"/><ellipse cx="12.9" cy="38.2" rx="4.4" ry="2.1" fill="#f6dd1e" transform="rotate(60 12.9 38.2)"/><ellipse cx="10.1" cy="38.2" rx="4.4" ry="1.3" fill="#e3b714" transform="rotate(90 10.1 38.2)"/><ellipse cx="7.6" cy="32.5" rx="4.4" ry="2.1" fill="#f6dd1e" transform="rotate(130 7.6 32.5)"/><ellipse cx="13.1" cy="33.4" rx="4.4" ry="2.1" fill="#f6dd1e" transform="rotate(70 13.1 33.4)"/><ellipse cx="10.3" cy="32.9" rx="4.4" ry="1.3" fill="#e3b714" transform="rotate(100 10.3 32.9)"/><ellipse cx="8.9" cy="26.9" rx="4.4" ry="2.1" fill="#f6dd1e" transform="rotate(140 8.9 26.9)"/><ellipse cx="14.2" cy="28.8" rx="4.4" ry="2.1" fill="#f6dd1e" transform="rotate(80 14.2 28.8)"/><ellipse cx="11.5" cy="27.8" rx="4.4" ry="1.3" fill="#e3b714" transform="rotate(110 11.5 27.8)"/><ellipse cx="11.5" cy="21.7" rx="4.0" ry="1.9" fill="#f6dd1e" transform="rotate(151 11.5 21.7)"/><ellipse cx="15.9" cy="24.3" rx="4.0" ry="1.9" fill="#f6dd1e" transform="rotate(91 15.9 24.3)"/><ellipse cx="13.7" cy="23.0" rx="4.0" ry="1.2" fill="#e3b714" transform="rotate(121 13.7 23.0)"/><ellipse cx="14.9" cy="17.1" rx="3.5" ry="1.7" fill="#f6dd1e" transform="rotate(161 14.9 17.1)"/><ellipse cx="18.3" cy="20.0" rx="3.5" ry="1.7" fill="#f6dd1e" transform="rotate(101 18.3 20.0)"/><ellipse cx="16.6" cy="18.5" rx="3.5" ry="1.0" fill="#e3b714" transform="rotate(131 16.6 18.5)"/><ellipse cx="19.1" cy="13.2" rx="3.1" ry="1.5" fill="#f6dd1e" transform="rotate(171 19.1 13.2)"/><ellipse cx="21.6" cy="16.2" rx="3.1" ry="1.5" fill="#f6dd1e" transform="rotate(111 21.6 16.2)"/><ellipse cx="20.4" cy="14.7" rx="3.1" ry="0.9" fill="#e3b714" transform="rotate(141 20.4 14.7)"/><ellipse cx="24.0" cy="10.1" rx="2.6" ry="1.2" fill="#f6dd1e" transform="rotate(182 24.0 10.1)"/><ellipse cx="25.5" cy="13.0" rx="2.6" ry="1.2" fill="#f6dd1e" transform="rotate(122 25.5 13.0)"/><ellipse cx="24.8" cy="11.6" rx="2.6" ry="0.8" fill="#e3b714" transform="rotate(152 24.8 11.6)"/><ellipse cx="29.3" cy="8.0" rx="2.2" ry="1.2" fill="#f6dd1e" transform="rotate(192 29.3 8.0)"/><ellipse cx="30.1" cy="10.6" rx="2.2" ry="1.2" fill="#f6dd1e" transform="rotate(132 30.1 10.6)"/><ellipse cx="29.7" cy="9.3" rx="2.2" ry="0.7" fill="#e3b714" transform="rotate(162 29.7 9.3)"/><ellipse cx="58.0" cy="62.3" rx="4.4" ry="2.1" fill="#f6dd1e" transform="rotate(-68 58.0 62.3)"/><ellipse cx="54.5" cy="57.9" rx="4.4" ry="2.1" fill="#f6dd1e" transform="rotate(-8 54.5 57.9)"/><ellipse cx="56.2" cy="60.1" rx="4.4" ry="1.3" fill="#e3b714" transform="rotate(-38 56.2 60.1)"/><ellipse cx="62.1" cy="58.6" rx="4.4" ry="2.1" fill="#f6dd1e" transform="rotate(-78 62.1 58.6)"/><ellipse cx="58.0" cy="54.9" rx="4.4" ry="2.1" fill="#f6dd1e" transform="rotate(-18 58.0 54.9)"/><ellipse cx="60.1" cy="56.7" rx="4.4" ry="1.3" fill="#e3b714" transform="rotate(-48 60.1 56.7)"/><ellipse cx="65.6" cy="54.2" rx="4.4" ry="2.1" fill="#f6dd1e" transform="rotate(-89 65.6 54.2)"/><ellipse cx="60.8" cy="51.3" rx="4.4" ry="2.1" fill="#f6dd1e" transform="rotate(-29 60.8 51.3)"/><ellipse cx="63.2" cy="52.8" rx="4.4" ry="1.3" fill="#e3b714" transform="rotate(-59 63.2 52.8)"/><ellipse cx="68.3" cy="49.2" rx="4.4" ry="2.1" fill="#f6dd1e" transform="rotate(-99 68.3 49.2)"/><ellipse cx="63.0" cy="47.2" rx="4.4" ry="2.1" fill="#f6dd1e" transform="rotate(-39 63.0 47.2)"/><ellipse cx="65.7" cy="48.2" rx="4.4" ry="1.3" fill="#e3b714" transform="rotate(-69 65.7 48.2)"/><ellipse cx="70.0" cy="43.8" rx="4.4" ry="2.1" fill="#f6dd1e" transform="rotate(-109 70.0 43.8)"/><ellipse cx="64.5" cy="42.8" rx="4.4" ry="2.1" fill="#f6dd1e" transform="rotate(-49 64.5 42.8)"/><ellipse cx="67.2" cy="43.3" rx="4.4" ry="1.3" fill="#e3b714" transform="rotate(-79 67.2 43.3)"/><ellipse cx="70.7" cy="38.2" rx="4.4" ry="2.1" fill="#f6dd1e" transform="rotate(-120 70.7 38.2)"/><ellipse cx="65.1" cy="38.2" rx="4.4" ry="2.1" fill="#f6dd1e" transform="rotate(-60 65.1 38.2)"/><ellipse cx="67.9" cy="38.2" rx="4.4" ry="1.3" fill="#e3b714" transform="rotate(-90 67.9 38.2)"/><ellipse cx="70.4" cy="32.5" rx="4.4" ry="2.1" fill="#f6dd1e" transform="rotate(-130 70.4 32.5)"/><ellipse cx="64.9" cy="33.4" rx="4.4" ry="2.1" fill="#f6dd1e" transform="rotate(-70 64.9 33.4)"/><ellipse cx="67.7" cy="32.9" rx="4.4" ry="1.3" fill="#e3b714" transform="rotate(-100 67.7 32.9)"/><ellipse cx="69.1" cy="26.9" rx="4.4" ry="2.1" fill="#f6dd1e" transform="rotate(-140 69.1 26.9)"/><ellipse cx="63.8" cy="28.8" rx="4.4" ry="2.1" fill="#f6dd1e" transform="rotate(-80 63.8 28.8)"/><ellipse cx="66.5" cy="27.8" rx="4.4" ry="1.3" fill="#e3b714" transform="rotate(-110 66.5 27.8)"/><ellipse cx="66.5" cy="21.7" rx="4.0" ry="1.9" fill="#f6dd1e" transform="rotate(-151 66.5 21.7)"/><ellipse cx="62.1" cy="24.3" rx="4.0" ry="1.9" fill="#f6dd1e" transform="rotate(-91 62.1 24.3)"/><ellipse cx="64.3" cy="23.0" rx="4.0" ry="1.2" fill="#e3b714" transform="rotate(-121 64.3 23.0)"/><ellipse cx="63.1" cy="17.1" rx="3.5" ry="1.7" fill="#f6dd1e" transform="rotate(-161 63.1 17.1)"/><ellipse cx="59.7" cy="20.0" rx="3.5" ry="1.7" fill="#f6dd1e" transform="rotate(-101 59.7 20.0)"/><ellipse cx="61.4" cy="18.5" rx="3.5" ry="1.0" fill="#e3b714" transform="rotate(-131 61.4 18.5)"/><ellipse cx="58.9" cy="13.2" rx="3.1" ry="1.5" fill="#f6dd1e" transform="rotate(-171 58.9 13.2)"/><ellipse cx="56.4" cy="16.2" rx="3.1" ry="1.5" fill="#f6dd1e" transform="rotate(-111 56.4 16.2)"/><ellipse cx="57.6" cy="14.7" rx="3.1" ry="0.9" fill="#e3b714" transform="rotate(-141 57.6 14.7)"/><ellipse cx="54.0" cy="10.1" rx="2.6" ry="1.2" fill="#f6dd1e" transform="rotate(-182 54.0 10.1)"/><ellipse cx="52.5" cy="13.0" rx="2.6" ry="1.2" fill="#f6dd1e" transform="rotate(-122 52.5 13.0)"/><ellipse cx="53.2" cy="11.6" rx="2.6" ry="0.8" fill="#e3b714" transform="rotate(-152 53.2 11.6)"/><ellipse cx="48.7" cy="8.0" rx="2.2" ry="1.2" fill="#f6dd1e" transform="rotate(-192 48.7 8.0)"/><ellipse cx="47.9" cy="10.6" rx="2.2" ry="1.2" fill="#f6dd1e" transform="rotate(-132 47.9 10.6)"/><ellipse cx="48.3" cy="9.3" rx="2.2" ry="0.7" fill="#e3b714" transform="rotate(-162 48.3 9.3)"/><polygon points="38.8,9.6 41.9,19.0 51.7,19.0 43.7,24.8 46.8,34.2 38.8,28.4 30.8,34.2 33.9,24.8 25.9,19.0 35.7,19.0" fill="#f6dd1e"/><polygon points="38.8,9.6 41.9,19.0 38.8,23.2" fill="#e3b714"/><polygon points="51.7,19.0 43.7,24.8 38.8,23.2" fill="#e3b714"/><polygon points="46.8,34.2 38.8,28.4 38.8,23.2" fill="#e3b714"/><polygon points="30.8,34.2 33.9,24.8 38.8,23.2" fill="#e3b714"/><polygon points="25.9,19.0 35.7,19.0 38.8,23.2" fill="#e3b714"/><text x="15.400" y="45.500" font-family="Liberation Sans,sans-serif" font-weight="700" font-size="9" fill="#f6dd1e" textLength="46" lengthAdjust="spacingAndGlyphs">THUẾ NHÀ NƯỚC</text></g></svg><span class="t" style="left:79.20px;top:124.00px;font-size:20px;color:#44454f;letter-spacing:0.421px;">Phát hành hóa đơn điện tử</span><span class="t" style="left:91.20px;top:149.00px;font-size:20px;color:#44454f;letter-spacing:0.315px;">theo NĐ123/2020/NĐCP</span><span class="t" style="left:22.70px;top:197.00px;font-size:16px;color:#44454f;letter-spacing:0.338px;">EMIS đã đáp ứng kết nối với phần mềm hóa đơn</span><span class="t" style="left:32.70px;top:222.00px;font-size:16px;color:#44454f;letter-spacing:0.467px;">điện tử meInvoice.vn để quản lý và phát hành</span><span class="t" style="left:73.40px;top:247.00px;font-size:16px;color:#44454f;letter-spacing:0.476px;">hóa đơn theo NĐ123/2020/NĐ-CP.</span><button class="btn g" style="left:79px;top:290px;width:250px;height:40px"></button><span class="t" style="left:151.00px;top:302.00px;font-size:16px;color:#fff;letter-spacing:0.222px;">Sử dụng ngay</span><button class="btn o" style="left:79px;top:340px;width:250px;height:39px"></button><span class="t" style="left:178.30px;top:352.00px;font-size:16px;color:#44454f;">Để sau</span></div><div style="left:0;top:0;width:1716px;height:1px;background:#3c3c3c;z-index:9"></div><div style="left:0;top:0;width:1px;height:960px;background:#3c3c3c;z-index:9"></div><div style="left:0;top:959px;width:1716px;height:1px;background:#3c3c3c;z-index:9"></div><div style="left:1707px;top:0;width:9px;height:960px;background:#000;z-index:9"></div></div></body></html>
